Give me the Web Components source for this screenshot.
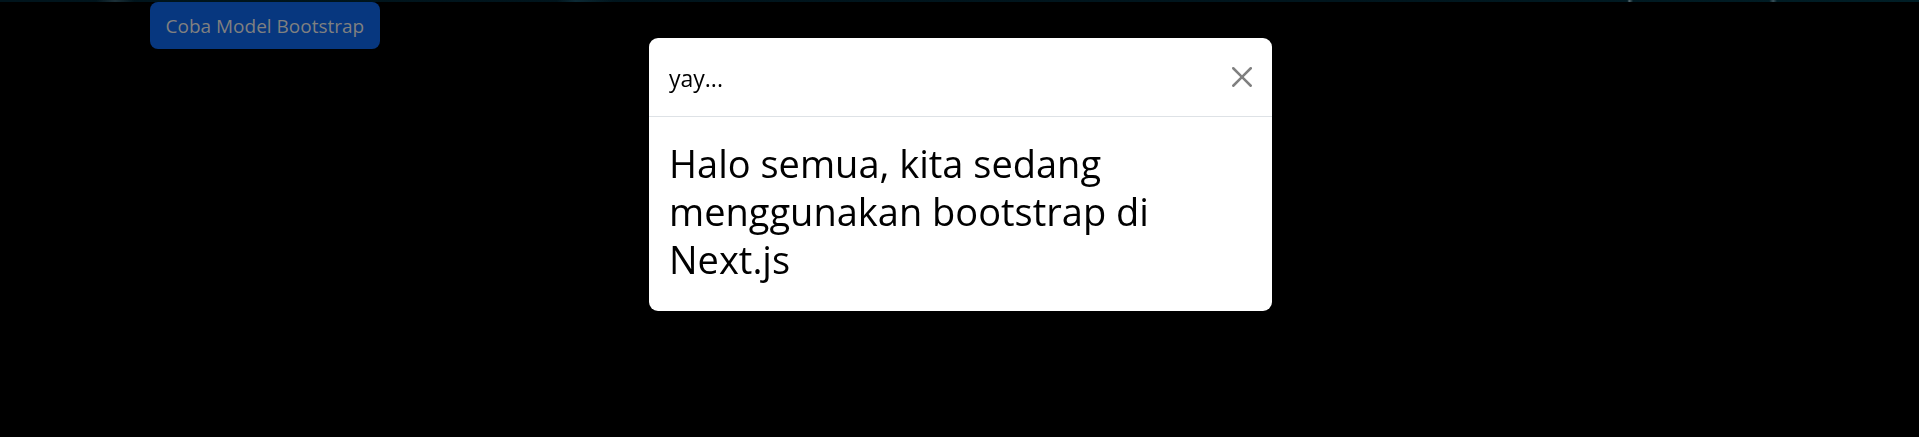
<!DOCTYPE html>
<html lang="id">
<head>
<meta charset="utf-8">
<title>Coba Model Bootstrap</title>
<style>
  html { height: 100%; }
  body { margin: 0; min-height: 100%; background: #000; font-family: "Segoe UI", "Open Sans", "Noto Sans", sans-serif; }
</style>
</head>
<body>
<demo-page>
  <launch-button>Coba Model Bootstrap</launch-button>
</demo-page>
<modal-dialog>
  <span slot="title">yay...</span>
  Halo semua, kita sedang menggunakan bootstrap di Next.js
</modal-dialog>

<script>
class DemoPage extends HTMLElement {
  constructor() {
    super();
    this.attachShadow({ mode: 'open' }).innerHTML = `
      <style>
        :host { display: block; }
        .stars {
          height: 2px;
          background:
            linear-gradient(90deg, transparent 5%, #1c3038 6%, transparent 7%, transparent 29%, #0c2a35 30%, transparent 32%,
              transparent 84.8%, #53666c 84.9%, transparent 85.1%, transparent 92.2%, #39515a 92.4%, transparent 92.6%),
            linear-gradient(90deg, #00141c, #00151d 70%, #001e26);
        }
        .container { max-width: 1620px; margin: 0 auto; padding: 0 15px; }
      </style>
      <div class="stars"></div>
      <main class="container"><slot></slot></main>`;
  }
}

class LaunchButton extends HTMLElement {
  constructor() {
    super();
    this.attachShadow({ mode: 'open' }).innerHTML = `
      <style>
        :host { display: block; }
        button {
          display: block; margin: 0; border: 0; border-radius: 8px;
          padding: 9px 16px 7px; background: #07377f; color: #808080;
          font: 400 19px/31px "Open Sans", "Noto Sans", sans-serif; cursor: pointer;
        }
      </style>
      <button type="button"><slot></slot></button>`;
  }
}

class ModalDialog extends HTMLElement {
  constructor() {
    super();
    this.attachShadow({ mode: 'open' }).innerHTML = `
      <style>
        :host { position: fixed; inset: 0; display: block; overflow: auto; padding: 38px 16px 38px 18px; box-sizing: border-box; }
        .content { max-width: 623px; margin: 0 auto; background: #fff; color: #000; border-radius: 9px; overflow: hidden; }
        header { display: flex; align-items: center; justify-content: space-between; padding: 20px; border-bottom: 1px solid #dee2e6; }
        h2 { margin: 0; padding-top: 2px; font-weight: 400; font-size: 23px; line-height: 36px; }
        button { display: block; padding: 0; border: 0; background: none; color: #808080; cursor: pointer; }
        svg { display: block; width: 20px; height: 20px; }
        .body { padding: 22px 20px 28px; }
        p { margin: 0; font-size: 38px; line-height: 48px; }
      </style>
      <section class="content" role="dialog" aria-modal="true" aria-labelledby="title">
        <header>
          <h2 id="title"><slot name="title"></slot></h2>
          <button type="button" aria-label="Close">
            <svg viewBox="0 0 16 16" fill="currentColor" aria-hidden="true"><path d="M.293.293a1 1 0 0 1 1.414 0L8 6.586 14.293.293a1 1 0 1 1 1.414 1.414L9.414 8l6.293 6.293a1 1 0 0 1-1.414 1.414L8 9.414l-6.293 6.293a1 1 0 0 1-1.414-1.414L6.586 8 .293 1.707a1 1 0 0 1 0-1.414z"/></svg>
          </button>
        </header>
        <div class="body"><p><slot></slot></p></div>
      </section>`;
  }
}

customElements.define('demo-page', DemoPage);
customElements.define('launch-button', LaunchButton);
customElements.define('modal-dialog', ModalDialog);
</script>
</body>
</html>
